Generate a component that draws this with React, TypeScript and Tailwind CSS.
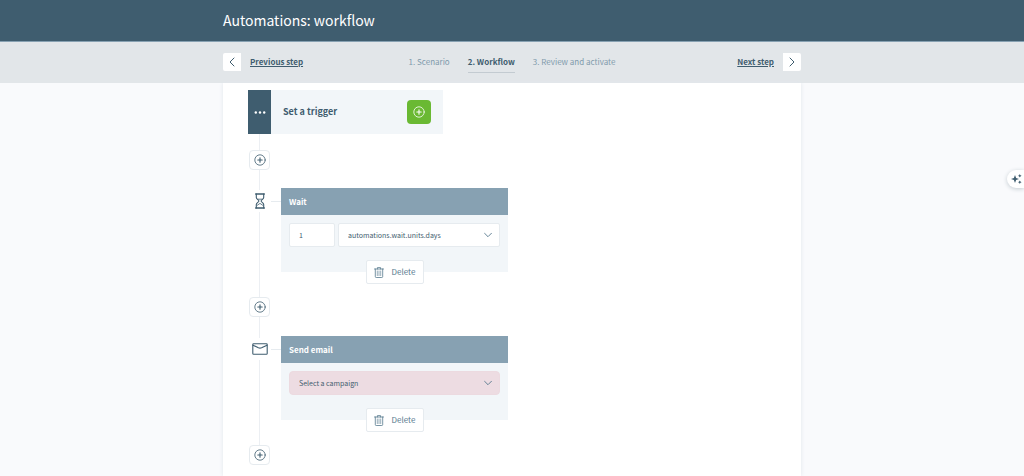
import { useState } from 'react';
import type { ReactNode } from 'react';

const strokeProps = {
  fill: 'none',
  stroke: 'currentColor',
  strokeLinecap: 'round' as const,
  strokeLinejoin: 'round' as const,
};

function PlusCircleIcon({ className = '' }: { className?: string }) {
  return (
    <svg viewBox="0 0 12 12" className={`h-3 w-3 ${className}`} strokeWidth={0.8} {...strokeProps}>
      <circle cx="6" cy="6" r="5.2" />
      <path d="M6 3.8v4.4M3.8 6h4.4" strokeWidth={1.1} />
    </svg>
  );
}

function HourglassIcon() {
  return (
    <svg viewBox="0 0 10 16" className="h-4 w-2.5" strokeWidth={1.1} {...strokeProps}>
      <path d="M0.6 1h8.8M0.6 15h8.8" strokeWidth={1.3} />
      <path d="M1.3 1v3.4C1.3 6.2 3.9 6.8 3.9 8s-2.6 1.8-2.6 3.6V15M8.7 1v3.4C8.7 6.2 6.1 6.8 6.1 8s2.6 1.8 2.6 3.6V15" />
      <path d="M3 6.2h4M2.4 12.2L5 10.4l2.6 1.8" strokeWidth={0.8} />
    </svg>
  );
}

function EnvelopeIcon() {
  return (
    <svg viewBox="0 0 16 12" className="h-3 w-4" strokeWidth={1.1} {...strokeProps}>
      <rect x="0.8" y="0.8" width="14.4" height="10.4" rx="0.8" />
      <path d="M1 2.2l5.4 2.6q1.6.7 3.2 0L15 2.2" />
    </svg>
  );
}

function TrashIcon() {
  return (
    <svg viewBox="0 0 10 11" className="h-[11px] w-2.5" strokeWidth={0.8} {...strokeProps}>
      <path d="M0.5 2h9M3.4 2V0.6h3.2V2M1.3 2v7.6q0 .9.9.9h5.6q.9 0 .9-.9V2" />
      <path d="M3.3 4v4.6M5 4v4.6M6.7 4v4.6" strokeWidth={0.6} />
    </svg>
  );
}

function ChevronDownIcon() {
  return (
    <svg
      viewBox="0 0 8 5"
      className="pointer-events-none absolute top-1/2 right-2 h-[5px] w-2 -translate-y-1/2 text-[#56788d]"
      strokeWidth={0.9}
      {...strokeProps}
    >
      <path d="M0.5 0.7L4 4.2 7.5 0.7" />
    </svg>
  );
}

function AddStepButton() {
  return (
    <div className="flex w-[23px] justify-center">
      <button
        type="button"
        aria-label="Add step"
        className="flex h-5 w-[21px] items-center justify-center rounded-sm border border-[#e6ebef] bg-white"
      >
        <PlusCircleIcon />
      </button>
    </div>
  );
}

function RailLine({ className }: { className: string }) {
  return (
    <div className={`flex w-[23px] justify-center ${className}`}>
      <span className="h-full w-px bg-[#eceff3]" />
    </div>
  );
}

interface StepProps {
  title: string;
  icon: ReactNode;
  children: ReactNode;
}

function Step({ title, icon, children }: StepProps) {
  return (
    <section className="flex">
      <div className="flex flex-col">
        <RailLine className="h-0.5" />
        <div className="flex h-[22px] items-center justify-center">{icon}</div>
        <RailLine className="flex-1" />
      </div>
      <span className="mt-[13px] h-px w-2.5 bg-[#e6ebef]" />
      <div className="w-[227px] pb-[13px]">
        <h2 className="flex h-[27px] items-center bg-[#87a1b2] px-2 text-[8px] font-bold text-white">
          {title}
        </h2>
        <div className="h-[57px] bg-[#f2f6f9] px-2 pt-2">{children}</div>
        <button
          type="button"
          className="relative mx-auto -mt-3 flex h-6 w-[58px] items-center justify-center gap-2 rounded-xs border border-[#e6ebef] bg-white text-[8px] text-[#56788d]"
        >
          <TrashIcon />
          Delete
        </button>
      </div>
    </section>
  );
}

const tabs = [
  { id: 'scenario', label: '1. Scenario' },
  { id: 'workflow', label: '2. Workflow' },
  { id: 'review', label: '3. Review and activate' },
];

export default function App() {
  const [amount, setAmount] = useState('1');
  const currentTab = 'workflow';

  return (
    <div className="flex min-h-screen flex-col bg-[#f9fafc] font-['Noto_Sans_CJK_SC',sans-serif] text-[#3f5d6f]">
      <header className="border-b border-[#87a1b2] bg-[#3f5d6f]">
        <div className="mx-auto flex h-[41px] max-w-[578px] items-center">
          <h1 className="text-[14px] text-white">Automations: workflow</h1>
        </div>
      </header>

      {/* Wizard navigation */}
      <div className="bg-[#e2e6e9] pb-px">
        <div className="mx-auto grid h-10 max-w-[578px] grid-cols-[1fr_auto_1fr] items-center text-[8px]">
          <a href="#scenario" className="flex items-center gap-[9px] font-bold underline">
            <span className="flex h-[18px] w-[18px] items-center justify-center rounded-l-xs bg-white">
              <svg viewBox="0 0 6 10" className="h-2.5 w-1.5" strokeWidth={1} {...strokeProps}>
                <path d="M5 1L1 5l4 4" />
              </svg>
            </span>
            Previous step
          </a>
          <nav className="flex items-center gap-[18px]">
            {tabs.map((tab) => (
              <a
                key={tab.id}
                href={`#${tab.id}`}
                className={`flex h-[21px] items-center border-b ${
                  tab.id === currentTab
                    ? 'border-[#c3cbd1] font-bold'
                    : 'border-transparent text-[#7f9aab]'
                }`}
              >
                {tab.label}
              </a>
            ))}
          </nav>
          <a href="#review" className="flex items-center justify-end gap-[9px] font-bold underline">
            Next step
            <span className="flex h-[18px] w-[18px] items-center justify-center rounded-r-xs bg-white">
              <svg viewBox="0 0 6 10" className="h-2.5 w-1.5" strokeWidth={1} {...strokeProps}>
                <path d="M1 1l4 4-4 4" />
              </svg>
            </span>
          </a>
        </div>
      </div>

      <main className="mx-auto w-full max-w-[578px] flex-1 bg-white px-[25px] pt-[7px] shadow-[0_0_4px_#e2e6ec]">
        {/* Trigger */}
        <section className="flex h-11 w-[195px] bg-[#f2f6f9]">
          <button
            type="button"
            aria-label="Trigger options"
            className="flex w-[23px] items-center justify-center bg-[#3f5d6f] text-white"
          >
            <svg viewBox="0 0 12 3" className="h-[3px] w-3" fill="currentColor">
              <circle cx="1.8" cy="1.5" r="1.2" />
              <circle cx="6" cy="1.5" r="1.2" />
              <circle cx="10.2" cy="1.5" r="1.2" />
            </svg>
          </button>
          <div className="flex flex-1 items-center justify-between px-3">
            <h2 className="text-[9px] font-bold">Set a trigger</h2>
            <button
              type="button"
              aria-label="Set a trigger"
              className="flex h-6 w-6 items-center justify-center rounded-sm bg-[#6ab933] text-white"
            >
              <PlusCircleIcon />
            </button>
          </div>
        </section>

        <RailLine className="h-4" />
        <AddStepButton />
        <RailLine className="h-[18px]" />

        <Step title="Wait" icon={<HourglassIcon />}>
          <div className="flex gap-[3px]">
            <input
              type="text"
              aria-label="Wait amount"
              value={amount}
              onChange={(e) => setAmount(e.target.value)}
              className="h-6 w-[46px] rounded-xs border border-[#e6ebef] bg-white px-[9px] text-[7px]"
            />
            <div className="relative flex-1">
              <select
                aria-label="Wait unit"
                className="block h-6 w-full appearance-none rounded-xs border border-[#e6ebef] bg-white px-[9px] text-[7px]"
              >
                <option>automations.wait.units.days</option>
              </select>
              <ChevronDownIcon />
            </div>
          </div>
        </Step>

        <AddStepButton />
        <RailLine className="h-[19px]" />

        <Step title="Send email" icon={<EnvelopeIcon />}>
          <div className="relative">
            <select
              aria-label="Campaign"
              className="block h-6 w-full appearance-none rounded-sm border border-[#ecdae0] bg-[#eddce2] px-[9px] text-[7px]"
            >
              <option>Select a campaign</option>
            </select>
            <ChevronDownIcon />
          </div>
        </Step>

        <AddStepButton />
      </main>

      {/* Floating assistant */}
      <button
        type="button"
        aria-label="Open assistant"
        className="fixed top-[170px] right-0 flex h-[18px] w-[17px] items-center rounded-l-full bg-white pl-1 shadow-[0_1px_4px_#c3cbd1]"
      >
        <svg viewBox="0 0 11 10" className="h-2.5 w-[11px]" fill="currentColor">
          <path d="M4 1l1.1 2.9L8 5 5.1 6.1 4 9 2.9 6.1 0 5l2.9-1.1z" />
          <path d="M8.8 0l.6 1.2 1.2.6-1.2.6-.6 1.2-.6-1.2L7 1.8l1.2-.6zM8.8 6.4l.6 1.2 1.2.6-1.2.6-.6 1.2-.6-1.2L7 8.2l1.2-.6z" />
        </svg>
      </button>
    </div>
  );
}
